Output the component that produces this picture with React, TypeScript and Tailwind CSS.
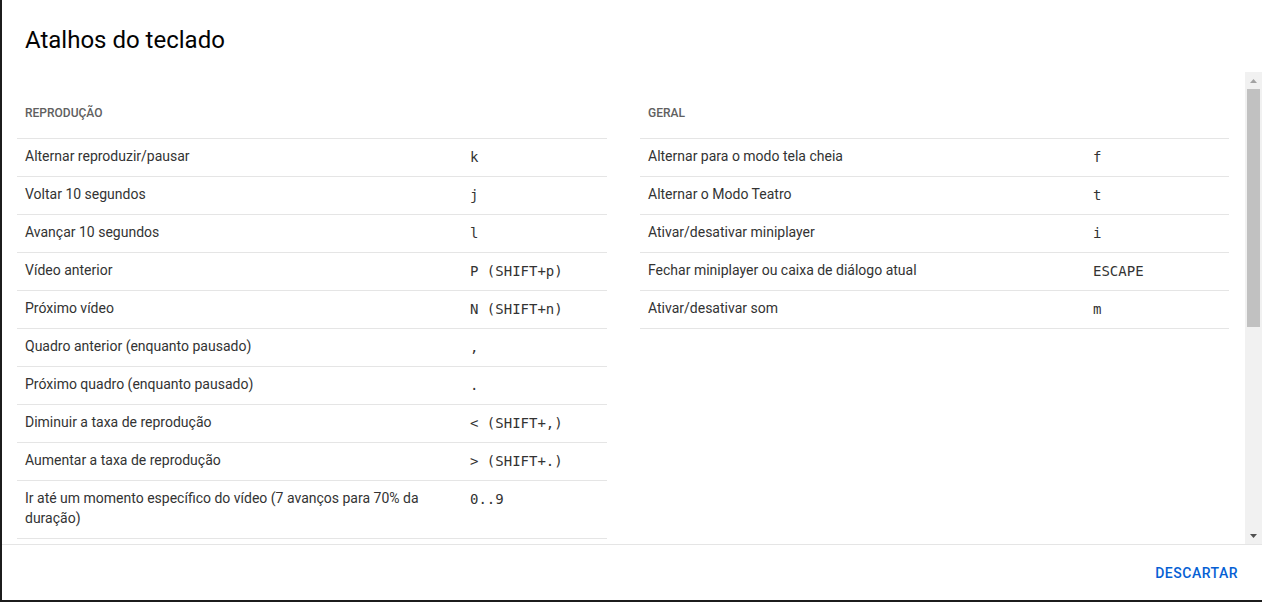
import React from "react";

type Row = { label: string; key: string };

const playback: Row[] = [
  { label: "Alternar reproduzir/pausar", key: "k" },
  { label: "Voltar 10 segundos", key: "j" },
  { label: "Avançar 10 segundos", key: "l" },
  { label: "Vídeo anterior", key: "P (SHIFT+p)" },
  { label: "Próximo vídeo", key: "N (SHIFT+n)" },
  { label: "Quadro anterior (enquanto pausado)", key: "," },
  { label: "Próximo quadro (enquanto pausado)", key: "." },
  { label: "Diminuir a taxa de reprodução", key: "< (SHIFT+,)" },
  { label: "Aumentar a taxa de reprodução", key: "> (SHIFT+.)" },
  { label: "Ir até um momento específico do vídeo (7 avanços para 70% da duração)", key: "0..9" },
];

const general: Row[] = [
  { label: "Alternar para o modo tela cheia", key: "f" },
  { label: "Alternar o Modo Teatro", key: "t" },
  { label: "Ativar/desativar miniplayer", key: "i" },
  { label: "Fechar miniplayer ou caixa de diálogo atual", key: "ESCAPE" },
  { label: "Ativar/desativar som", key: "m" },
];

function Section({ title, rows, width }: { title: string; rows: Row[]; width: string }) {
  return (
    <div className={width}>
      <div className="pl-2 pt-[33px] pb-[17px] text-[12px] leading-4 font-medium uppercase text-[#606060] border-b border-[#e5e5e5]">
        {title}
      </div>
      {rows.map((r) => (
        <div key={r.label} className="flex border-b border-[#e5e5e5]">
          <div className="w-[453px] shrink-0 pl-2 pr-[25px] pt-[7px] pb-[10px] text-[14px] leading-5 text-[#333333]">
            {r.label}
          </div>
          <div
            className="pt-2 pb-[9px] text-[14px] leading-5 text-[#333333] whitespace-pre"
            style={{ fontFamily: '"DejaVu Sans Mono", "Liberation Mono", monospace' }}
          >
            {r.key}
          </div>
        </div>
      ))}
    </div>
  );
}

export default function App() {
  return (
    <div
      className="w-[1262px] h-[602px] bg-[#1c1c1c] flex flex-col overflow-hidden"
      style={{ fontFamily: 'Roboto, "Noto Sans", Arial, sans-serif' }}
    >
      <div className="ml-[2px] w-[1260px] h-[600px] bg-white flex flex-col">
        <div className="h-[72px] shrink-0 pl-[23px] pt-[24px] text-[24px] leading-8 text-[#030303]">
          Atalhos do teclado
        </div>
        <div className="flex h-[472px] shrink-0">
          <div className="flex-1 overflow-hidden pl-[15px]">
            <div className="flex gap-[33px]">
              <Section title="Reprodução" rows={playback} width="w-[590px]" />
              <Section title="Geral" rows={general} width="w-[589px]" />
            </div>
          </div>
          <div className="w-[17px] shrink-0 bg-[#f1f1f1] flex flex-col items-center">
            <div className="h-[17px] w-full flex items-center justify-center">
              <svg width="7" height="4" viewBox="0 0 7 4">
                <polygon points="3.5,0 7,4 0,4" fill="#a3a3a3" />
              </svg>
            </div>
            <div className="w-[13px] h-[238px] bg-[#c1c1c1]" />
            <div className="flex-1" />
            <div className="h-[17px] w-full flex items-center justify-center">
              <svg width="7" height="4" viewBox="0 0 7 4">
                <polygon points="0,0 7,0 3.5,4" fill="#505050" />
              </svg>
            </div>
          </div>
        </div>
        <div className="flex-1 border-t border-[#e5e5e5] flex items-center justify-end pr-[8px]">
          <button className="px-4 py-[10px] text-[14px] leading-5 font-medium tracking-[0.5px] uppercase text-[#065fd4]">
            Descartar
          </button>
        </div>
      </div>
    </div>
  );
}
